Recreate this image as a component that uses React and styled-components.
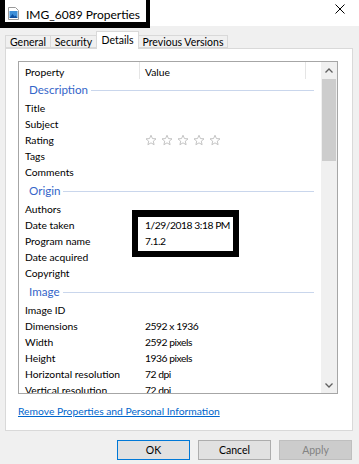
import React from "react";
import styled, { createGlobalStyle } from "styled-components";

const Global = createGlobalStyle`
  html, body { margin: 0; padding: 0; background: #f0f0f0; }
  body { font-family: Lato, "Liberation Sans", Arial, sans-serif; }
`;

const Window = styled.div`
  position: relative;
  width: 359px;
  height: 464px;
  background: #f0f0f0;
  display: flex;
  flex-direction: column;
  overflow: hidden;
  font-family: Lato, "Liberation Sans", Arial, sans-serif;
  font-size: 10.3px;
  color: #000;
`;

const TitleBar = styled.div`
  position: relative;
  height: 26px;
  background: #fff;
  display: flex;
  align-items: center;
  padding-left: 8px;
  gap: 7px;
  flex-shrink: 0;
`;

const TitleText = styled.span`
  font-size: 12px;
  color: #000;
  margin-top: 2px;
`;

const CloseBtn = styled.div`
  margin-left: auto;
  width: 46px;
  height: 26px;
  display: flex;
  align-items: center;
  justify-content: center;
  padding-left: 8px;
  box-sizing: border-box;
  margin-top: -9px;
`;

const Annotation = styled.div`
  position: absolute;
  box-sizing: border-box;
  border-style: solid;
  border-color: #000;
  left: ${(p) => p.$x}px;
  top: ${(p) => p.$y}px;
  width: ${(p) => p.$w}px;
  height: ${(p) => p.$h}px;
  border-width: ${(p) => p.$bw};
  pointer-events: none;
`;

const TabStrip = styled.div`
  height: 22px;
  display: flex;
  align-items: flex-end;
  padding-left: 5px;
  flex-shrink: 0;
  position: relative;
  z-index: 2;
`;

const Tab = styled.div`
  box-sizing: border-box;
  width: ${(p) => p.$w}px;
  height: ${(p) => (p.$active ? 18 : 13)}px;
  margin-bottom: ${(p) => (p.$active ? -1 : 0)}px;
  background: ${(p) => (p.$active ? "#fff" : "#f0f0f0")};
  border: 1px solid #d9d9d9;
  border-bottom: ${(p) => (p.$active ? "none" : "1px solid #d9d9d9")};
  margin-left: ${(p) => (p.$first ? 0 : -1)}px;
  display: flex;
  align-items: ${(p) => (p.$active ? "flex-start" : "center")};
  padding-top: ${(p) => (p.$active ? 2 : 0)}px;
  justify-content: center;
  font-size: 10.5px;
  line-height: 12px;
  color: #000;
  position: relative;
  z-index: ${(p) => (p.$active ? 2 : 1)};
`;

const Panel = styled.div`
  box-sizing: border-box;
  margin-left: 5px;
  width: 348px;
  height: 383px;
  background: #fff;
  border: 1px solid #d9d9d9;
  padding: 12px 0 0 12px;
  display: flex;
  flex-direction: column;
  flex-shrink: 0;
`;

const ListBox = styled.div`
  box-sizing: border-box;
  width: 320px;
  height: 333px;
  border: 1px solid #a6a6a6;
  display: flex;
  overflow: hidden;
`;

const ListContent = styled.div`
  flex: 1;
  display: flex;
  flex-direction: column;
  overflow: hidden;
`;

const HeaderRow = styled.div`
  height: 17px;
  display: flex;
  flex-shrink: 0;
`;

const HeaderCell = styled.div`
  box-sizing: border-box;
  width: ${(p) => p.$w}px;
  border-right: 1px solid #e5e5e5;
  padding-left: ${(p) => p.$pad}px;
  display: flex;
  align-items: center;
  padding-top: 2px;
`;

const GroupHeader = styled.div`
  height: 21px;
  display: flex;
  align-items: center;
  padding-left: 10px;
  padding-right: 7px;
  flex-shrink: 0;
  color: #3566c9;
  font-size: 11.6px;
  &::after {
    content: "";
    flex: 1;
    height: 1px;
    background: #c9d6ec;
    margin-left: 3px;
    margin-top: 1px;
  }
`;

const Row = styled.div`
  height: 16px;
  display: flex;
  align-items: center;
  flex-shrink: 0;
`;

const PropCell = styled.div`
  box-sizing: border-box;
  width: 121px;
  padding-left: 6px;
  white-space: nowrap;
`;

const ValueCell = styled.div`
  padding-left: 5px;
  white-space: nowrap;
  display: flex;
  gap: 4px;
  letter-spacing: -0.45px;
`;

const ScrollBar = styled.div`
  width: 16px;
  background: #f0f0f0;
  display: flex;
  flex-direction: column;
`;

const Arrow = styled.div`
  height: 16px;
  display: flex;
  align-items: center;
  justify-content: center;
`;

const Track = styled.div`
  flex: 1;
  padding: 1px 1px 0;
  display: flex;
  flex-direction: column;
`;

const Thumb = styled.div`
  height: 82px;
  background: #cdcdcd;
`;

const Link = styled.a`
  margin-top: 10px;
  color: #0066cc;
  text-decoration: underline;
  font-size: 10.3px;
  line-height: 14px;
  cursor: pointer;
`;

const ButtonRow = styled.div`
  margin-top: 9px;
  display: flex;
  justify-content: flex-end;
  gap: 8px;
  padding-right: 7px;
`;

const Button = styled.button`
  box-sizing: border-box;
  width: 73px;
  height: 20px;
  font-family: Lato, "Liberation Sans", Arial, sans-serif;
  font-size: 10.5px;
  padding: 0;
  background: ${(p) => (p.$disabled ? "#cccccc" : "#e1e1e1")};
  color: ${(p) => (p.$disabled ? "#838383" : "#000")};
  border: 1px solid
    ${(p) => (p.$default ? "#0078d7" : p.$disabled ? "#bfbfbf" : "#adadad")};
`;

const Star = () => (
  <svg width="12" height="12" viewBox="0 0 24 24">
    <path
      d="M12 2.5l2.9 6.6 7.1.6-5.4 4.7 1.6 7-6.2-3.7-6.2 3.7 1.6-7L2 9.7l7.1-.6z"
      fill="none"
      stroke="#b5b5b5"
      strokeWidth="1.6"
      strokeLinejoin="round"
    />
  </svg>
);

const ImageIcon = () => (
  <svg width="11" height="13" viewBox="0 0 11 13">
    <path d="M0.5 0.5h7l3 3v9h-10z" fill="#fff" stroke="#9a9a9a" />
    <rect x="1.5" y="4" width="8" height="7" fill="#3d8fd8" />
    <path d="M1.5 11l3-4 2 2.5 1-1 2 2.5z" fill="#0f4f9e" />
  </svg>
);

const groups = [
  { title: "Description", rows: [["Title"], ["Subject"], ["Rating", "stars"], ["Tags"], ["Comments"]] },
  {
    title: "Origin",
    rows: [
      ["Authors"],
      ["Date taken", "1/29/2018 3:18 PM"],
      ["Program name", "7.1.2"],
      ["Date acquired"],
      ["Copyright"],
    ],
  },
  {
    title: "Image",
    rows: [
      ["Image ID"],
      ["Dimensions", "2592 x 1936"],
      ["Width", "2592 pixels"],
      ["Height", "1936 pixels"],
      ["Horizontal resolution", "72 dpi"],
      ["Vertical resolution", "72 dpi"],
    ],
  },
];

export default function App() {
  return (
    <Window>
      <Global />
      <TitleBar>
        <ImageIcon />
        <TitleText>IMG_6089 Properties</TitleText>
        <CloseBtn>
          <svg width="10" height="10" viewBox="0 0 10 10">
            <path d="M0.5 0.5l9 9M9.5 0.5l-9 9" stroke="#000" strokeWidth="1" />
          </svg>
        </CloseBtn>
      </TitleBar>
      <TabStrip>
        <Tab $w={46} $first>General</Tab>
        <Tab $w={47}>Security</Tab>
        <Tab $w={43} $active>Details</Tab>
        <Tab $w={90}>Previous Versions</Tab>
      </TabStrip>
      <Panel>
        <ListBox>
          <ListContent>
            <HeaderRow>
              <HeaderCell $w={121} $pad={6}>Property</HeaderCell>
              <HeaderCell $w={166} $pad={5}>Value</HeaderCell>
            </HeaderRow>
            {groups.map((g) => (
              <React.Fragment key={g.title}>
                <GroupHeader>{g.title}</GroupHeader>
                {g.rows.map(([k, v]) => (
                  <Row key={k}>
                    <PropCell>{k}</PropCell>
                    <ValueCell>
                      {v === "stars" ? (
                        <>
                          <Star />
                          <Star />
                          <Star />
                          <Star />
                          <Star />
                        </>
                      ) : (
                        v
                      )}
                    </ValueCell>
                  </Row>
                ))}
              </React.Fragment>
            ))}
          </ListContent>
          <ScrollBar>
            <Arrow>
              <svg width="8" height="5" viewBox="0 0 8 5">
                <path d="M0.5 4.5L4 1l3.5 3.5" fill="none" stroke="#606060" strokeWidth="1.3" />
              </svg>
            </Arrow>
            <Track>
              <Thumb />
            </Track>
            <Arrow>
              <svg width="8" height="5" viewBox="0 0 8 5">
                <path d="M0.5 0.5L4 4l3.5-3.5" fill="none" stroke="#606060" strokeWidth="1.3" />
              </svg>
            </Arrow>
          </ScrollBar>
        </ListBox>
        <Link>Remove Properties and Personal Information</Link>
      </Panel>
      <ButtonRow>
        <Button $default>OK</Button>
        <Button>Cancel</Button>
        <Button $disabled>Apply</Button>
      </ButtonRow>
      <Annotation $x={0} $y={0} $w={150} $h={28} $bw="0 4px 6px 5px" />
      <Annotation $x={132} $y={210} $w={107} $h={47} $bw="7px 6px 6px 6px" />
    </Window>
  );
}
